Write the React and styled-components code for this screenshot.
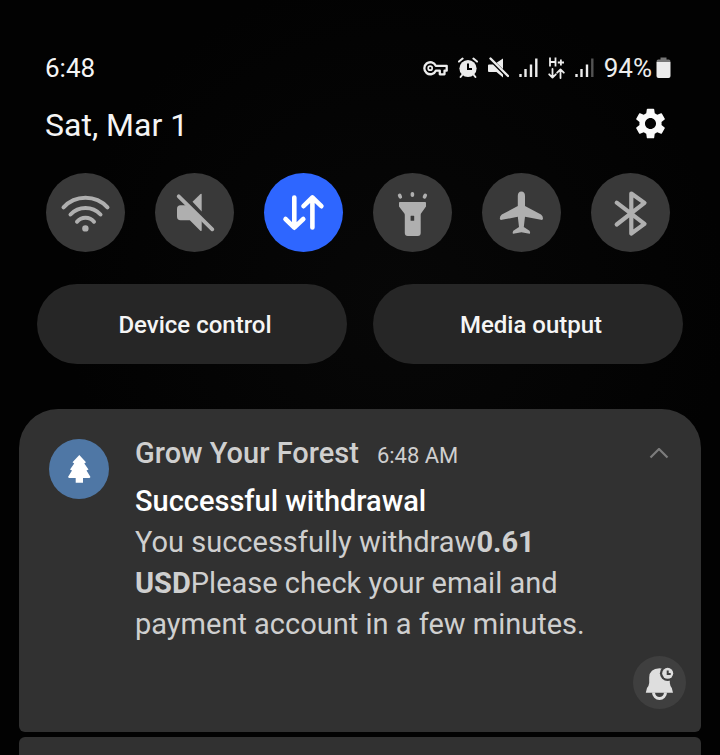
import styled, {createGlobalStyle} from "styled-components";
import {MdSettings} from "react-icons/md";

const GlobalStyle = createGlobalStyle`
  * {
    box-sizing: border-box;
  }

  body {
    margin: 0;
    background: #020202;
    color: #f5f5f5;
    font-family: Roboto, "Liberation Sans", sans-serif;
  }

  button {
    border: 0;
    padding: 0;
    color: inherit;
    font-family: inherit;
    cursor: pointer;
  }

  svg {
    display: block;
    flex: none;
  }
`;

const Panel = styled.main`
  display: flex;
  flex-direction: column;
  min-height: 100vh;
  padding-top: 52px;
  background: radial-gradient(circle at 55% 40%, #070707 0%, #020202 55%);
`;

const StatusBar = styled.div`
  display: flex;
  align-items: center;
  justify-content: space-between;
  height: 32px;
  padding: 0 49px 0 45px;
  font-size: 26px;
`;

const StatusIcons = styled.div`
  display: flex;
  align-items: center;
  gap: 10px;
  color: #ececec;
`;

const Battery = styled.div`
  display: flex;
  align-items: center;
  gap: 4px;
`;

const DateRow = styled.header`
  display: flex;
  align-items: center;
  justify-content: space-between;
  height: 40px;
  margin-top: 19px;
  padding: 0 51px 0 45px;
`;

const DateText = styled.h1`
  margin: 0;
  padding-top: 4px;
  font-size: 32px;
  font-weight: 400;
`;

const IconButton = styled.button`
  background: none;
  color: ${props => props.$color};
`;

const QuickTiles = styled.div`
  display: flex;
  justify-content: space-between;
  margin-top: 30px;
  padding: 0 50px 0 46px;
`;

const Tile = styled.button`
  width: 79px;
  height: 79px;
  border-radius: 50%;
  background: ${props => props.$active ? "#2e66ff" : "#393939"};
  color: ${props => props.$active ? "#ffffff" : "#afafaf"};
`;

const PillRow = styled.div`
  display: flex;
  gap: 26px;
  margin-top: 32px;
  padding: 0 37px;
`;

const Pill = styled.button`
  flex: 1;
  height: 80px;
  padding: 2px 0 0 6px;
  border-radius: 40px;
  background: #262626;
  font-size: 24px;
  font-weight: 500;
`;

const Notifications = styled.section`
  display: flex;
  flex: 1;
  flex-direction: column;
  gap: 5px;
  margin-top: 45px;
  padding: 0 19px;
`;

const Card = styled.article`
  display: flex;
  flex-direction: column;
  padding: 24px 15px 23px 30px;
  border-radius: 39px 39px 6px 6px;
  background: #313131;
`;

const NextCard = styled.div`
  flex: 1;
  min-height: 18px;
  border-radius: 6px 6px 0 0;
  background: #313131;
`;

const CardMain = styled.div`
  display: flex;
  gap: 26px;
`;

const AppIcon = styled.div`
  flex: none;
  width: 60px;
  height: 60px;
  margin-top: 6px;
  border-radius: 50%;
  background: #4f77a5;
`;

const CardContent = styled.div`
  flex: 1;
  line-height: 41px;
`;

const CardHeader = styled.div`
  display: flex;
  align-items: baseline;
  gap: 18px;
  margin-bottom: 5px;
  padding-right: 17px;
  color: #cfcfcf;
`;

const AppName = styled.span`
  font-size: 29px;
  font-weight: 500;
`;

const Time = styled.time`
  flex: 1;
  font-size: 22px;
`;

const CollapseButton = styled(IconButton)`
  align-self: center;
`;

const Title = styled.h2`
  margin: 0;
  font-size: 29px;
  font-weight: 500;
  line-height: 41px;
  color: #ffffff;
`;

const Message = styled.p`
  max-width: 480px;
  margin: 0;
  font-size: 29px;
  color: #cfcfcf;
`;

const SnoozeButton = styled.button`
  align-self: flex-end;
  width: 53px;
  height: 53px;
  margin-top: 11px;
  border-radius: 50%;
  background: #3f3f3f;
  color: #dedede;
`;

const stroke = {
    fill: "none",
    stroke: "currentColor",
    strokeLinecap: "round",
    strokeLinejoin: "round",
}

const KeyIcon = () => (
    <svg width="25" height="22" viewBox="0 0 25 22">
        <path d="M12.800 8.800A6 6 0 1 0 12.800 13.700H16.800V17.300H21.500V13.700H23.700V8.800Z" {...stroke} strokeWidth="2.300"/>
        <circle cx="7.200" cy="11.200" r="2" {...stroke} strokeWidth="1.700"/>
    </svg>
)

const AlarmIcon = () => (
    <svg width="20" height="22" viewBox="0 0 20 22">
        <circle cx="10" cy="11.500" r="8.600" fill="currentColor"/>
        <path d="M1 4.600L4.600 1.600M19 4.600L15.400 1.600M4.500 17.500L2.600 20M15.500 17.500L17.400 20" {...stroke} strokeWidth="2"/>
        <path d="M10 6.500V12H14" fill="none" stroke="#020202" strokeWidth="2"/>
    </svg>
)

const SmallMuteIcon = () => (
    <svg width="21" height="22" viewBox="0 0 21 22">
        <path d="M1 7.500H5L15 17.500V20.500L8.500 15H1Q0 15 0 14V8.500Q0 7.500 1 7.500ZM15 1.500V12L8.500 5.800Z" fill="currentColor"/>
        <path d="M2.500 1.500L20 19" {...stroke} strokeWidth="2.400"/>
    </svg>
)

const SignalIcon = ({weak}) => (
    <svg width="19" height="22" viewBox="0 0 19 22">
        <path d="M1.500 17V20M6.500 12V20M12 7.500V20" {...stroke} strokeLinecap="butt" strokeWidth="2.400"/>
        <path d="M17.300 1.500V20" {...stroke} strokeLinecap="butt" strokeWidth="2.400" opacity={weak ? 0.35 : 1}/>
    </svg>
)

const HPlusIcon = () => (
    <svg width="17" height="22" viewBox="0 0 17 22">
        <path d="M2 0.500V9.500M7.500 0.500V9.500M2 5H7.500M9.800 5.500H16M12.900 2.500V8.500" {...stroke} strokeLinecap="butt" strokeWidth="1.800"/>
        <path d="M4.500 12V20.500M1.200 17.300L4.500 20.600L7.800 17.300M12.500 21V12.500M9.200 15.700L12.500 12.400L15.800 15.700" {...stroke} strokeWidth="1.800"/>
    </svg>
)

const BatteryIcon = () => (
    <svg width="15" height="22" viewBox="0 0 15 22">
        <path d="M4.500 0.500H10.500V2.500H13Q14.500 2.500 14.500 5H0.500Q0.500 2.500 2 2.500H4.500Z" fill="#777777"/>
        <path d="M0.500 5H14.500V19Q14.500 21 12.500 21H2.500Q0.500 21 0.500 19Z" fill="currentColor"/>
    </svg>
)

const WifiIcon = () => (
    <svg viewBox="0 0 79 79">
        <path d="M17.500 34.300A30 30 0 0 1 61.500 34.300M24.500 41.500A20.500 20.500 0 0 1 54.500 41.500M31 48.700A11 11 0 0 1 48 48.700" {...stroke} strokeWidth="4"/>
        <circle cx="39.400" cy="55.400" r="3.200" fill="currentColor"/>
    </svg>
)

const MuteIcon = () => (
    <svg viewBox="0 0 79 79">
        <path d="M46.700 21.500V38.500L37.500 28.700L45.500 21Q46.700 20.200 46.700 21.500Z" fill="currentColor"/>
        <path d="M25.500 32.300H32.500L46.700 46.500V57Q46.700 58.700 45.300 57.700L34.800 47.300H25.500Q22 47.300 22 43.500V36Q22 32.300 25.500 32.300Z" fill="currentColor"/>
        <path d="M23.700 23.300L57.300 56.300" {...stroke} strokeWidth="3.800"/>
    </svg>
)

const DataIcon = () => (
    <svg viewBox="0 0 79 79">
        <path d="M30.300 24.500V54.500M21.500 46L30.300 54.700L39.300 46M48.400 54.500V24.500M39.500 33.200L48.400 24.500L57.400 33.200" {...stroke} strokeWidth="4.600"/>
    </svg>
)

const TorchIcon = () => (
    <svg viewBox="0 0 79 79">
        <path fillRule="evenodd" d="M26.800 29H52.200Q53 29 53 30V33.500L48 40.500Q47.700 41 47.700 42V60Q47.700 63 44.700 63H34.800Q31.800 63 31.800 60V42Q31.800 41 31.400 40.500L26 33.500V30Q26 29 26.800 29ZM38 42.700Q37.600 42.700 37.600 43.200V47.300Q37.600 47.800 38 47.800H40.700Q41.200 47.800 41.200 47.300V43.200Q41.200 42.700 40.700 42.700Z" fill="currentColor"/>
        <path d="M39.400 20.700V22.300M26.600 22.300L27.300 23.900M52.300 22.300L51.500 23.900" {...stroke} strokeWidth="3.600"/>
    </svg>
)

const PlaneIcon = () => (
    <svg viewBox="0 0 79 79">
        <path d="M39.400 18.500Q43 18.500 43 23V33L59 41.600Q61 43 61 45.500Q61 47.200 59 46.800L43 43.800L41.800 54L47.500 57.800Q48.800 60.800 47.500 60.800L39.400 59.300L31.300 60.800Q30 60.800 31.300 57.800L37 54L35.800 43.800L19.800 46.800Q17.800 47.200 17.800 45.500Q17.800 43 19.800 41.600L35.800 33V23Q35.800 18.500 39.400 18.500Z" fill="currentColor"/>
    </svg>
)

const BluetoothIcon = () => (
    <svg viewBox="0 0 79 79">
        <path d="M25.700 29.700L53.500 50.900L40.300 60.500V20.500L53.500 29.900L25.700 51.500" {...stroke} strokeWidth="4.200"/>
    </svg>
)

const TreeIcon = () => (
    <svg viewBox="0 0 60 60">
        <path d="M30.300 16L37 23.300L35.300 24.500L39.500 30.500L37.500 31.500L41.500 38L40.500 39H34V43.800H26.700V39H20L19 38L23 31.500L21 30.500L25.200 24.500L23.500 23.300Z" fill="#ffffff"/>
    </svg>
)

const ChevronIcon = () => (
    <svg width="20" height="14" viewBox="0 0 20 14">
        <path d="M1.500 9.500L10 1L18.500 9.500" fill="none" stroke="currentColor" strokeWidth="2.200"/>
    </svg>
)

const BellIcon = () => (
    <svg viewBox="0 0 53 53">
        <path d="M26.500 12.300Q36.500 12.500 36.800 21.500V27Q37 29.500 38.800 32L40 36.700H12.800L14 32Q16 29.500 16.200 27V21.500Q16.500 12.500 26.500 12.300Z" fill="currentColor"/>
        <path d="M20.500 36.500A6 6 0 0 0 32.500 36.500" {...stroke} strokeLinecap="butt" strokeWidth="3"/>
        <circle cx="34.700" cy="17.300" r="7.800" fill="#3f3f3f"/>
        <circle cx="34.700" cy="17.300" r="5.500" fill="currentColor"/>
        <path d="M34.700 14.500V18H37.700" fill="none" stroke="#3f3f3f" strokeWidth="2"/>
    </svg>
)

const tiles = [
    {label: "Wi-Fi", Icon: WifiIcon},
    {label: "Mute", Icon: MuteIcon},
    {label: "Mobile data", Icon: DataIcon, active: true},
    {label: "Flashlight", Icon: TorchIcon},
    {label: "Airplane mode", Icon: PlaneIcon},
    {label: "Bluetooth", Icon: BluetoothIcon},
]

const App = () => {
    return (
        <>
            <GlobalStyle/>
            <Panel>
                <StatusBar>
                    <span>6:48</span>
                    <StatusIcons>
                        <KeyIcon/>
                        <AlarmIcon/>
                        <SmallMuteIcon/>
                        <SignalIcon/>
                        <HPlusIcon/>
                        <SignalIcon weak/>
                        <Battery>
                            <span>94%</span>
                            <BatteryIcon/>
                        </Battery>
                    </StatusIcons>
                </StatusBar>
                <DateRow>
                    <DateText>Sat, Mar 1</DateText>
                    <IconButton $color="#fafafa" aria-label="Settings">
                        <MdSettings size={37}/>
                    </IconButton>
                </DateRow>
                <QuickTiles>
                    {tiles.map(({label, Icon, active}) => (
                        <Tile key={label} $active={active} aria-label={label} aria-pressed={!!active}>
                            <Icon/>
                        </Tile>
                    ))}
                </QuickTiles>
                <PillRow>
                    <Pill>Device control</Pill>
                    <Pill>Media output</Pill>
                </PillRow>
                <Notifications>
                    <Card>
                        <CardMain>
                            <AppIcon>
                                <TreeIcon/>
                            </AppIcon>
                            <CardContent>
                                <CardHeader>
                                    <AppName>Grow Your Forest</AppName>
                                    <Time>6:48 AM</Time>
                                    <CollapseButton $color="#7c7c7c" aria-label="Collapse">
                                        <ChevronIcon/>
                                    </CollapseButton>
                                </CardHeader>
                                <Title>Successful withdrawal</Title>
                                <Message>
                                    You successfully withdraw<b>0.61</b> <b>USD</b>Please check your email and
                                    payment account in a few minutes.
                                </Message>
                            </CardContent>
                        </CardMain>
                        <SnoozeButton aria-label="Snooze">
                            <BellIcon/>
                        </SnoozeButton>
                    </Card>
                    <NextCard/>
                </Notifications>
            </Panel>
        </>
    )
}

export default App
